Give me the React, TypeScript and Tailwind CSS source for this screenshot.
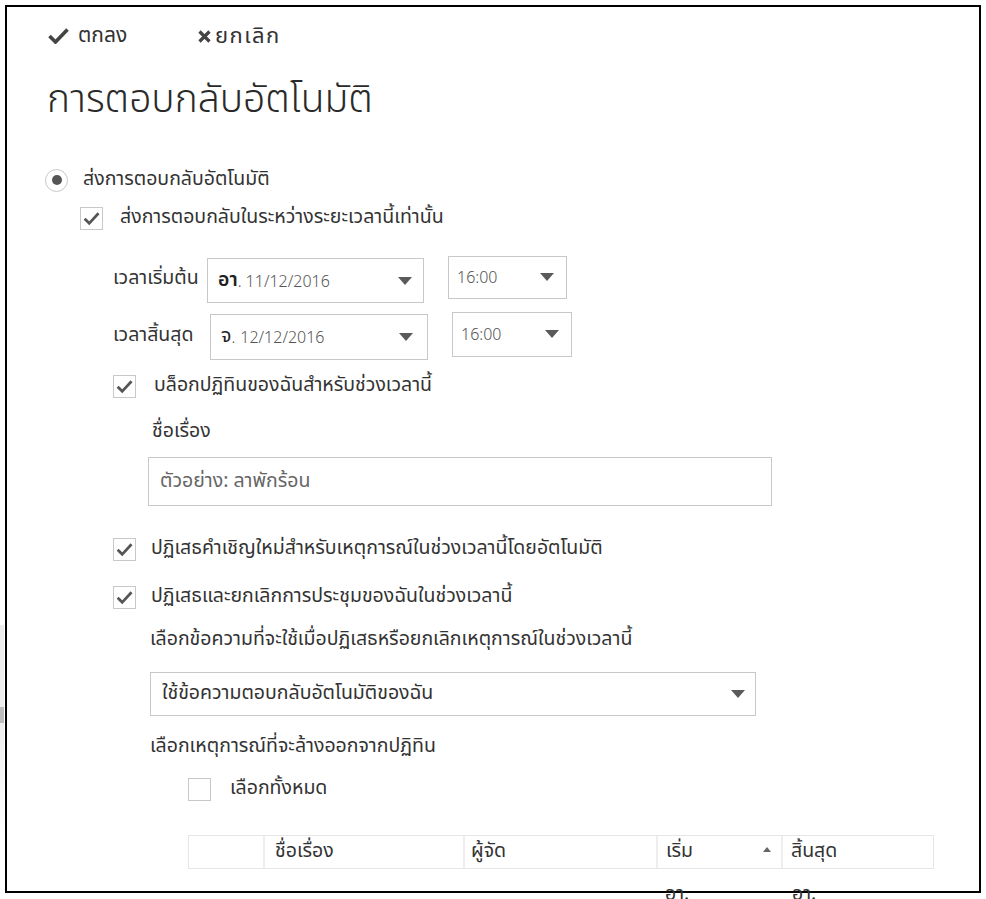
import React from 'react';

// small shared bits
const Check = () => (
  <svg width="23" height="23" viewBox="0 0 23 23" className="block">
    <path d="M4 11.8 L9 16.8 L19.2 5.8" fill="none" stroke="#555" strokeWidth="3" />
  </svg>
);

function Checkbox({ checked = true }: { checked?: boolean }) {
  return (
    <div className="box-border flex h-[23px] w-[23px] shrink-0 items-center justify-center border border-[#c8c8c8] bg-white">
      {checked && <Check />}
    </div>
  );
}

const Caret = () => (
  <svg width="14" height="8" viewBox="0 0 14 8" className="block">
    <path d="M0 0 L14 0 L7 8 Z" fill="#5a5a5a" />
  </svg>
);

const num = "font-['Noto_Sans',sans-serif] text-[16px] font-light text-[#555]";

function Select({ children, className }: { children: React.ReactNode; className: string }) {
  return (
    <div className={`box-border flex items-center justify-between border border-[#c8c8c8] bg-white ${className}`}>
      <div className="flex items-center">{children}</div>
      <Caret />
    </div>
  );
}

export default function App() {
  return (
    <div className="relative h-[899px] w-[986px] overflow-hidden bg-white font-['Leelawadee_UI','Noto_Sans_Thai','Noto_Sans_Thai_UI',Tahoma,sans-serif] text-[19.5px] text-[#333]">
      {/* page behind the panel peeking out on the left */}
      <div className="absolute left-0 top-[625px] h-[218px] w-[4px] bg-gradient-to-b from-[#ececec] via-[#efefef] to-white" />
      <div className="absolute left-0 top-[707px] h-[16px] w-[4px] bg-[#bdbdbd]" />

      <div className="ml-[5px] mt-[5px] box-border h-[888px] w-[976px] border-2 border-black">
        {/* toolbar */}
        <div className="ml-[41px] mt-[13px] flex h-[32px] items-center text-[21px] text-[#333]">
          <div className="flex w-[150px] items-center">
            <svg width="21" height="16" viewBox="0 0 21 16" className="block">
              <path d="M1.5 8 L7.5 14 L19.5 1.5" fill="none" stroke="#444" strokeWidth="3.6" />
            </svg>
            <span className="ml-[9px]">ตกลง</span>
          </div>
          <svg width="13" height="13" viewBox="0 0 13 13" className="block">
            <path d="M1.5 1.5 L11.5 11.5 M11.5 1.5 L1.5 11.5" fill="none" stroke="#444" strokeWidth="3.2" />
          </svg>
          <span className="ml-[4px] text-[22px] tracking-[1.5px]">ยกเลิก</span>
        </div>

        <h1 className="ml-[40px] mt-[25px] h-[48px] text-[39px] font-light leading-[48px] text-[#2a2a2a]">
          การตอบกลับอัตโนมัติ
        </h1>

        {/* radio */}
        <div className="ml-[38px] mt-[43px] flex h-[24px] items-center">
          <div className="box-border flex h-[23px] w-[23px] items-center justify-center rounded-full border border-[#c8c8c8]">
            <div className="h-[10px] w-[10px] rounded-full bg-[#555]" />
          </div>
          <span className="ml-[15px]">ส่งการตอบกลับอัตโนมัติ</span>
        </div>

        <div className="ml-[73px]">
          <div className="mt-[14px] flex h-[24px] items-center">
            <Checkbox />
            <span className="ml-[17px]">ส่งการตอบกลับในระหว่างระยะเวลานี้เท่านั้น</span>
          </div>

          <div className="ml-[33px]">
            {/* start */}
            <div className="mt-[25px] flex h-[48px] items-start">
              <div className="flex h-[48px] w-[94px] items-center">เวลาเริ่มต้น</div>
              <Select className="mt-[3px] h-[45px] w-[217px] pl-[10px] pr-[11px]">
                <span className="font-semibold text-[#222]">อา</span>
                <span className={num}>.</span>
                <span className={`ml-[4px] ${num}`}>11/12/2016</span>
              </Select>
              <Select className="ml-[24px] mt-[1px] h-[43px] w-[119px] pb-[2px] pl-[8px] pr-[12px]">
                <span className={num}>16:00</span>
              </Select>
            </div>
            {/* end */}
            <div className="mt-[9px] flex h-[48px] items-start">
              <div className="flex h-[48px] w-[97px] items-center">เวลาสิ้นสุด</div>
              <Select className="mt-[2px] h-[46px] w-[218px] pl-[10px] pr-[14px]">
                <span className="text-[#222]">จ</span>
                <span className={num}>.</span>
                <span className={`ml-[5px] ${num}`}>12/12/2016</span>
              </Select>
              <Select className="ml-[24px] h-[45px] w-[120px] pb-[2px] pl-[8px] pr-[12px]">
                <span className={num}>16:00</span>
              </Select>
            </div>

            <div className="mt-[14px] flex h-[24px] items-center">
              <Checkbox />
              <span className="ml-[18px]">บล็อกปฏิทินของฉันสำหรับช่วงเวลานี้</span>
            </div>

            <div className="ml-[39px] mt-[22px] flex h-[24px] items-center">ชื่อเรื่อง</div>
            <div className="ml-[35px] mt-[13px] box-border flex h-[49px] w-[624px] items-center border border-[#c8c8c8] pl-[11px] text-[#666]">
              ตัวอย่าง: ลาพักร้อน
            </div>

            <div className="mt-[31px] flex h-[24px] items-center">
              <Checkbox />
              <span className="ml-[15px]">ปฏิเสธคำเชิญใหม่สำหรับเหตุการณ์ในช่วงเวลานี้โดยอัตโนมัติ</span>
            </div>
            <div className="mt-[24px] flex h-[24px] items-center">
              <Checkbox />
              <span className="ml-[15px]">ปฏิเสธและยกเลิกการประชุมของฉันในช่วงเวลานี้</span>
            </div>

            <div className="ml-[37px]">
              <div className="mt-[19px] flex h-[24px] items-center">
                เลือกข้อความที่จะใช้เมื่อปฏิเสธหรือยกเลิกเหตุการณ์ในช่วงเวลานี้
              </div>
              <div className="mt-[20px] box-border flex h-[44px] w-[606px] items-center justify-between border border-[#c8c8c8] pl-[11px] pr-[10px]">
                <span>ใช้ข้อความตอบกลับอัตโนมัติของฉัน</span>
                <Caret />
              </div>

              <div className="mt-[19px] flex h-[24px] items-center">
                เลือกเหตุการณ์ที่จะล้างออกจากปฏิทิน
              </div>

              <div className="ml-[38px]">
                <div className="mt-[18px] flex h-[24px] items-center">
                  <Checkbox checked={false} />
                  <span className="ml-[19px]">เลือกทั้งหมด</span>
                </div>

                {/* events table */}
                <div className="mt-[34px] w-[746px]">
                  <div className="box-border flex h-[34px] items-stretch border border-[#e6e6e6]">
                    <div className="w-[76px] border-r-2 border-[#eeeeee]" />
                    <div className="flex w-[200px] items-center border-r-2 border-[#eeeeee] pl-[10px]">ชื่อเรื่อง</div>
                    <div className="flex w-[193px] items-center border-r-2 border-[#eeeeee] pl-[6px]">ผู้จัด</div>
                    <div className="flex w-[125px] items-center justify-between border-r-2 border-[#eeeeee] pl-[8px] pr-[10px]">
                      <span>เริ่ม</span>
                      <svg width="8" height="5" viewBox="0 0 8 5" className="mb-[6px] block">
                        <path d="M0 5 L8 5 L4 0 Z" fill="#666" />
                      </svg>
                    </div>
                    <div className="flex flex-1 items-center pl-[8px]">สิ้นสุด</div>
                  </div>
                  <div className="flex pt-[13px] leading-[24px]">
                    <div className="w-[477px]" />
                    <div className="w-[125px]">อา.</div>
                    <div className="pl-[2px]">อา.</div>
                  </div>
                </div>
              </div>
            </div>
          </div>
        </div>
      </div>
    </div>
  );
}
